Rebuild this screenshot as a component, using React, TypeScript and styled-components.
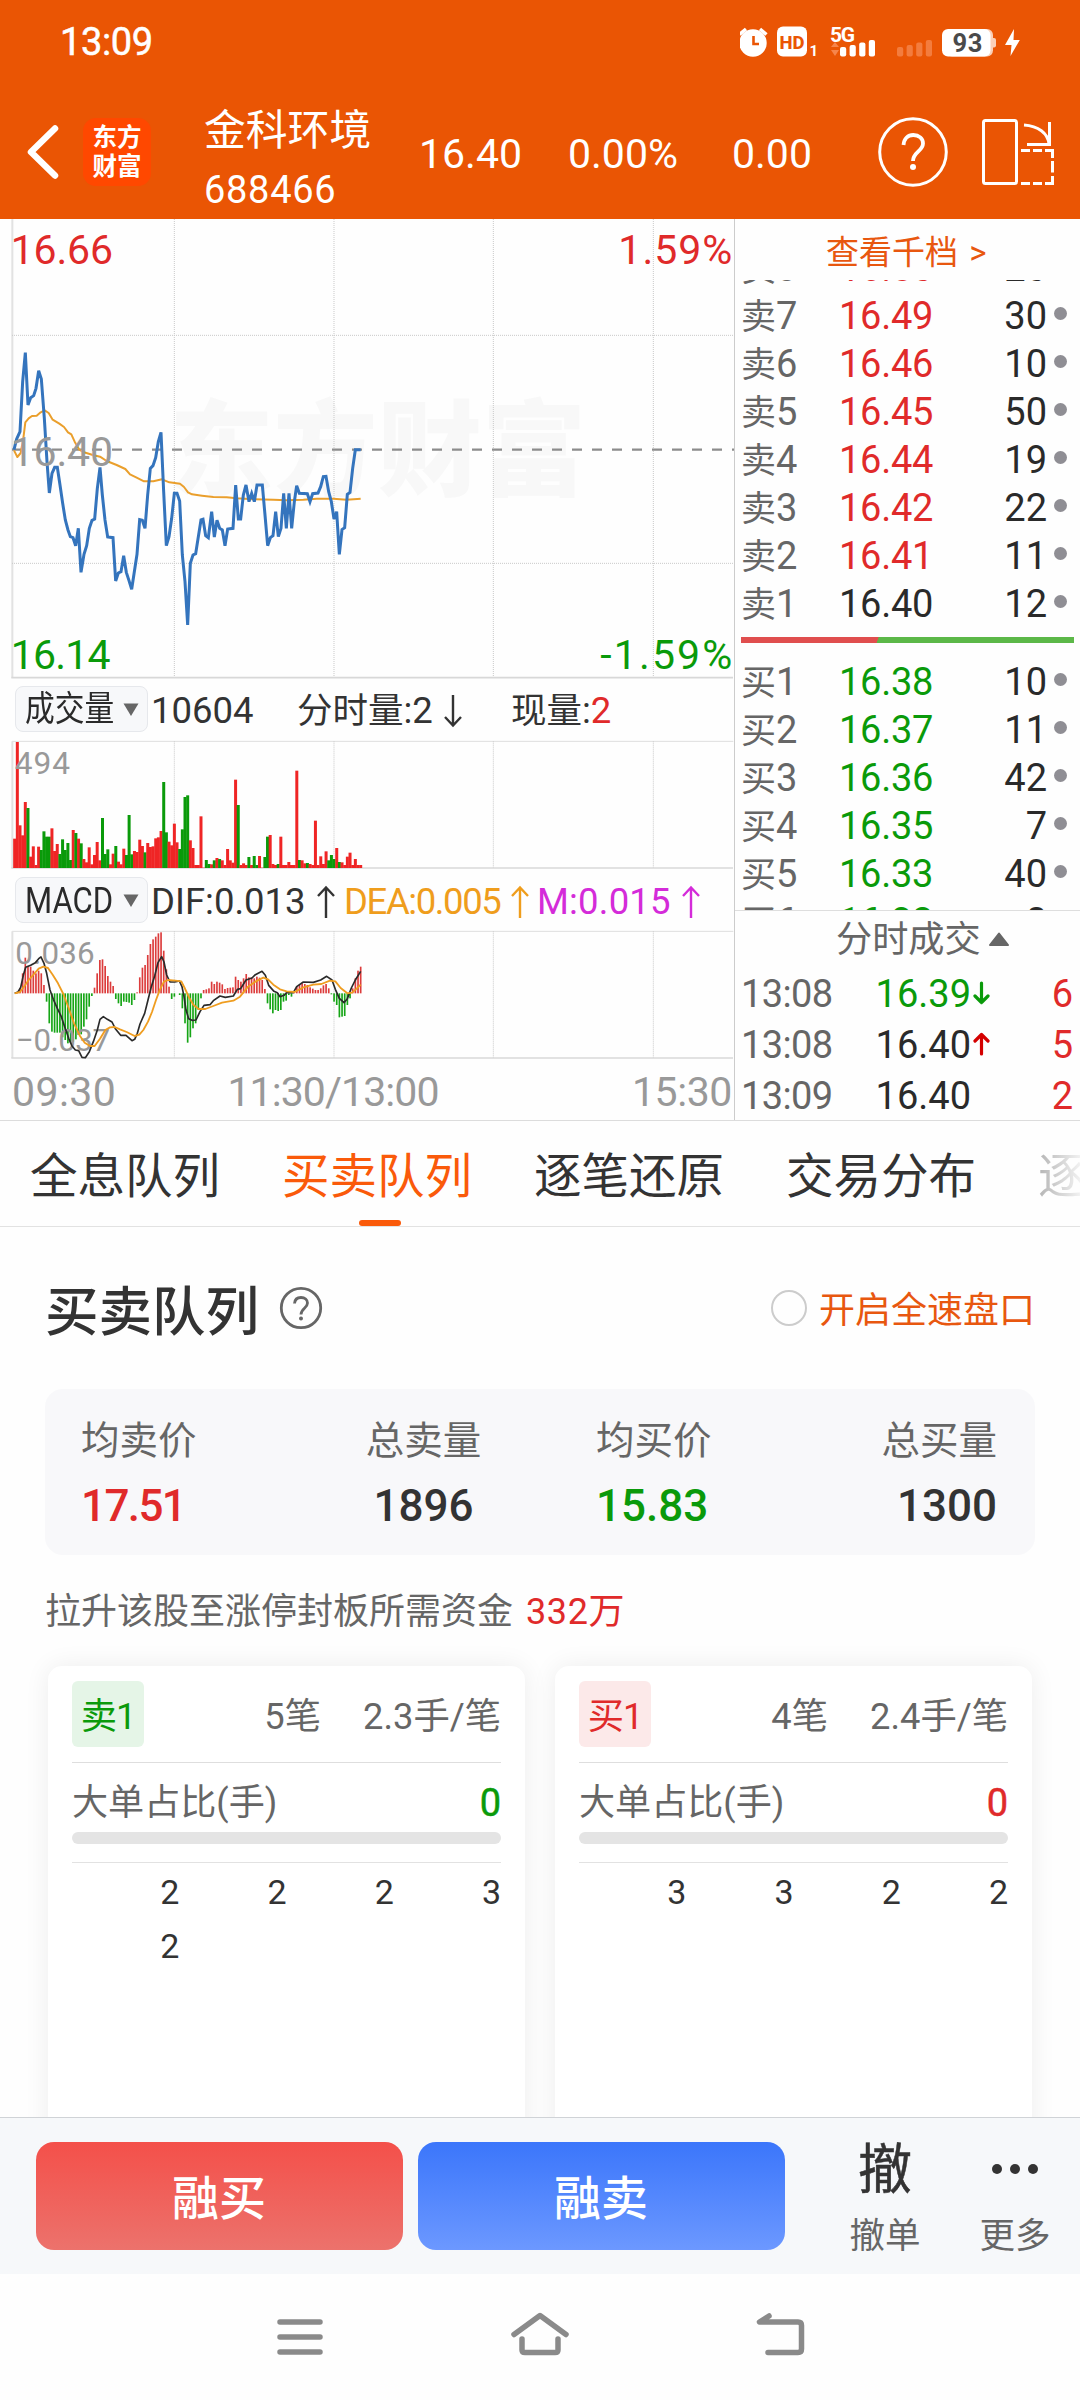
import React from "react";
import styled, { createGlobalStyle, css } from "styled-components";

const RED = "#e02a2a";
const GREEN = "#0a9a0a";
const INK = "#2a2a2a";
const GREY = "#666";
const SANS = `Roboto, "Noto Sans CJK SC", sans-serif`;

const Global = createGlobalStyle`
  * { box-sizing: border-box; }
  body { margin: 0; background: #fff; font-family: ${SANS}; color: ${INK}; }
`;

const Page = styled.div`
  width: 1080px;
  height: 2400px;
  overflow: hidden;
  display: flex;
  flex-direction: column;
  background: #fefefe;
  white-space: nowrap;
`;

/* ---------- header ---------- */
const Header = styled.header`
  height: 219px;
  background: #ea5504;
  color: #fff;
  flex: none;
`;
const StatusBar = styled.div`
  height: 84px;
  padding: 0 60px 0 60px;
  display: flex;
  align-items: center;
  justify-content: space-between;
`;
const Clock = styled.div`
  font-size: 38px;
  -webkit-text-stroke: 0.5px #fff;
  line-height: 84px;
  letter-spacing: -0.4px;
`;
const TitleBar = styled.div`
  height: 135px;
  display: flex;
  align-items: center;
  padding-left: 24px;
`;
const Logo = styled.div`
  width: 68px;
  height: 68px;
  margin: 0 0 0 20px;
  border-radius: 13px;
  background: #ff4800;
  display: flex;
  flex-direction: column;
  align-items: center;
  padding-top: 3px;
  font: 700 24.5px/29px "Noto Sans CJK SC", sans-serif;
`;
const StockName = styled.div`
  width: 215px;
  margin-left: 53px;
  display: flex;
  flex-direction: column;
  padding-top: 16px;
  font-size: 41.8px;
  line-height: 60px;
`;
const StockCode = styled.div`
  font-size: 38px;
  line-height: 58px;
  letter-spacing: 0.7px;
`;
const Quote = styled.div<{ $w: number }>`
  width: ${(p) => p.$w}px;
  font-size: 41px;
  line-height: 50px;
  padding-top: 5px;
`;

/* ---------- market area ---------- */
const Market = styled.section`
  height: 902px;
  flex: none;
  display: flex;
  border-bottom: 1px solid #dcdcdc;
`;
const Charts = styled.div`
  width: 735px;
  border-right: 1px solid #ccc;
  display: flex;
  flex-direction: column;
  svg { display: block; flex: none; }
`;
const ToolRow = styled.div<{ $h: number }>`
  height: ${(p) => p.$h}px;
  flex: none;
  display: flex;
  align-items: center;
  padding-left: 15px;
  font-size: 36.5px;
  color: #333;
`;
const Pill = styled.div`
  width: 133px;
  height: 46px;
  flex: none;
  border: 1px solid #e6e8ec;
  border-radius: 8px;
  background: #f7f8fa;
  display: flex;
  align-items: center;
  padding-left: 9px;
  margin-right: 3px;
  color: ${INK};
`;
const PillText = styled.span<{ $size: number; $scale: number }>`
  width: 98px;
  flex: none;
  font-size: ${(p) => p.$size}px;
  line-height: 44px;
  padding-top: 2px;
  transform: scaleX(${(p) => p.$scale});
  transform-origin: left;
`;
const Metric = styled.div<{ $w: number; $c?: string; $ls?: number }>`
  width: ${(p) => p.$w}px;
  color: ${(p) => p.$c || "#333"};
  letter-spacing: ${(p) => p.$ls || 0}px;
  line-height: 50px;
  padding-top: 3px;
  display: flex;
  align-items: center;
`;
const Cjk = styled.span<{ $size: number }>`
  font-size: ${(p) => p.$size}px;
`;
const TimeAxis = styled.div`
  height: 54px;
  display: flex;
  justify-content: space-between;
  padding: 1px 2px 0 12px;
  font-size: 41px;
  line-height: 54px;
  color: #999;
`;
const AxisTime = styled.span<{ $ls: number; $shift?: number }>`
  letter-spacing: ${(p) => p.$ls}px;
  margin-right: ${(p) => p.$shift || 0}px;
`;

const Book = styled.div`
  flex: 1;
  display: flex;
  flex-direction: column;
  min-width: 0;
`;
const DepthLink = styled.div`
  height: 61px;
  flex: none;
  padding-left: 91px;
  font-size: 33px;
  line-height: 67px;
  color: #e8570f;
  word-spacing: 3px;
`;
const Levels = styled.div`
  height: 631px;
  flex: none;
  overflow: hidden;
  display: flex;
  flex-direction: column;
  border-bottom: 1px solid #dedede;
`;
const Asks = styled.div`
  margin-top: -37px;
  flex: none;
`;
const Bids = styled.div`
  padding-top: 14px;
  flex: none;
`;
const LevelRow = styled.div`
  height: 48px;
  display: flex;
  align-items: center;
  padding: 3px 0 0 6px;
  font-size: 38px;
  line-height: 45px;
`;
const LevelName = styled.div`
  width: 81px;
  color: ${GREY};
`;
const LevelPrice = styled.div<{ $c: string }>`
  width: 111px;
  text-align: right;
  letter-spacing: -0.3px;
  color: ${(p) => p.$c};
`;
const LevelQty = styled.div`
  width: 114px;
  text-align: right;
  color: ${INK};
`;
const Dot = styled.i`
  width: 13px;
  height: 13px;
  border-radius: 50%;
  background: #8f8e94;
  margin: -7px 0 0 7px;
`;
const Ratio = styled.div`
  width: 333px;
  height: 6px;
  flex: none;
  margin: 10px 0 0 6px;
  background: linear-gradient(110deg, #e04e4e 0 41%, #5cb848 41.2%);
`;
const TradesHead = styled.div`
  height: 57px;
  flex: none;
  padding: 2px 0 2px 101px;
  display: flex;
  align-items: center;
  gap: 7px;
  font-size: 36.2px;
  line-height: 56px;
  color: ${GREY};
`;
const TradeRow = styled.div`
  height: 51px;
  flex: none;
  display: flex;
  align-items: center;
  padding: 1px 7px 0 6px;
  font-size: 38px;
  line-height: 51px;
`;
const TradeTime = styled.div`
  width: 100px;
  color: ${GREY};
  letter-spacing: -0.6px;
`;
const TradePrice = styled.div<{ $c: string }>`
  width: 130px;
  text-align: right;
  color: ${(p) => p.$c};
`;
const TradeArrow = styled.div`
  width: 22px;
  padding: 0 0 2px 2px;
  svg { display: block; }
`;
const TradeQty = styled.div`
  flex: 1;
  text-align: right;
  color: ${RED};
`;

/* ---------- tabs ---------- */
const Tabs = styled.nav`
  height: 106px;
  flex: none;
  display: flex;
  gap: 62px;
  padding-left: 30px;
  overflow: hidden;
  border-bottom: 1px solid #e2e2e2;
`;
const Tab = styled.div<{ $on?: boolean; $faded?: boolean }>`
  width: 190px;
  flex: none;
  display: flex;
  flex-direction: column;
  align-items: center;
  justify-content: space-between;
  font-size: 47.5px;
  line-height: 98px;
  padding-top: 7px;
  height: 105px;
  color: ${(p) => (p.$on ? "#fa5a0a" : "#333")};
  ${(p) =>
    p.$faded &&
    css`
      width: 48px;
      align-items: flex-start;
      background: linear-gradient(90deg, #b4b4b4, #f4f4f4 44px);
      background-clip: text;
      -webkit-background-clip: text;
      color: transparent;
    `}
`;
const TabText = styled.span`
  height: 92px;
`;
const Underline = styled.i`
  width: 42px;
  height: 6px;
  margin-left: 5px;
  border-radius: 3px;
  background: #fa5a0a;
`;

/* ---------- queue ---------- */
const Queue = styled.main`
  height: 890px;
  flex: none;
  overflow: hidden;
  padding: 0 45px;
`;
const QueueHead = styled.div`
  height: 162px;
  display: flex;
  align-items: center;
`;
const QueueTitle = styled.h1`
  margin: 0 20px 0 0;
  font-size: 53.5px;
  font-weight: 500;
  line-height: 80px;
  color: #333;
  padding-top: 9px;
`;
const FastToggle = styled.div`
  margin-left: auto;
  display: flex;
  align-items: center;
  gap: 12px;
  font-size: 36px;
  line-height: 50px;
  color: #e8570f;
  padding: 6px 0 0 0;
`;
const Radio = styled.i`
  width: 36px;
  height: 36px;
  margin-top: -6px;
  border: 2px solid #ccc;
  border-radius: 50%;
`;
const Summary = styled.div`
  height: 166px;
  border-radius: 18px;
  background: #f8f8fa;
  display: grid;
  grid-template-columns: 284px 231px 284px 117px;
  padding: 18px 0 0 36px;
`;
const SumCell = styled.div<{ $align: string }>`
  width: 117px;
  text-align: ${(p) => p.$align};
`;
const SumLabel = styled.div`
  font-size: 38.5px;
  line-height: 68px;
  color: ${GREY};
`;
const SumValue = styled.div<{ $c: string; $ls?: number }>`
  font-size: 44px;
  font-weight: 500;
  line-height: 62px;
  letter-spacing: ${(p) => p.$ls || 0}px;
  color: ${(p) => p.$c};
`;
const Note = styled.p`
  margin: 0;
  height: 111px;
  padding-top: 2px;
  font-size: 36px;
  line-height: 111px;
  color: ${GREY};
`;
const NoteValue = styled.span`
  margin-left: 13px;
  letter-spacing: 0.6px;
  color: ${RED};
`;
const Cards = styled.div`
  display: flex;
  gap: 30px;
  padding: 0 3px;
`;
const Card = styled.article`
  width: 477px;
  height: 520px;
  padding: 15px 24px;
  border-radius: 14px;
  background: #fff;
  box-shadow: 0 0 26px rgba(0, 0, 0, 0.07);
`;
const CardTop = styled.div`
  height: 82px;
  display: flex;
  align-items: flex-start;
  justify-content: flex-end;
  border-bottom: 1px solid #dedede;
  color: ${GREY};
  font-size: 36.3px;
  line-height: 71px;
  gap: 42px;
`;
const Badge = styled.span<{ $c: string; $bg: string }>`
  width: 72px;
  height: 66px;
  margin-right: auto;
  border-radius: 6px;
  text-align: center;
  letter-spacing: -1px;
  color: ${(p) => p.$c};
  background: ${(p) => p.$bg};
`;
const BigRow = styled.div`
  display: flex;
  justify-content: space-between;
  height: 69px;
  font-size: 36.1px;
  line-height: 80px;
  color: ${GREY};
`;
const BigValue = styled.span<{ $c: string }>`
  color: ${(p) => p.$c};
  font-size: 38px;
  -webkit-text-stroke: 0.5px ${(p) => p.$c};
`;
const Track = styled.div`
  height: 12px;
  border-radius: 6px;
  background: #e4e4e4;
`;
const Orders = styled.div`
  margin-top: 18px;
  border-top: 1px solid #e2e2e2;
  padding-top: 2px;
  display: grid;
  grid-template-columns: repeat(4, 1fr);
  font-size: 34px;
  line-height: 54px;
  text-align: right;
  color: #333;
`;

/* ---------- bottom ---------- */
const ActionBar = styled.footer`
  height: 157px;
  flex: none;
  border-top: 1px solid #d0d3d7;
  background: #f6f8fa;
  display: flex;
  padding: 24px 0 0 36px;
`;
const Trade = styled.button<{ $from: string; $to: string }>`
  width: 367px;
  height: 108px;
  margin: 0 15px 0 0;
  padding: 5px 1px 0 0;
  border: 0;
  border-radius: 18px;
  background: linear-gradient(${(p) => p.$from}, ${(p) => p.$to});
  color: #fff;
  font: 500 47px/100px ${SANS};
`;
const Action = styled.div<{ $w: number }>`
  width: ${(p) => p.$w}px;
  display: flex;
  flex-direction: column;
  align-items: center;
  font-size: 35.5px;
  line-height: 60px;
  color: ${GREY};
`;
const ActionIcon = styled.div`
  height: 64px;
  display: flex;
  align-items: center;
  padding-bottom: 6px;
  font-size: 54px;
  line-height: 58px;
  -webkit-text-stroke: 0.5px #333;
  color: #333;
  gap: 8px;
`;
const MoreDot = styled.i`
  width: 10px;
  height: 10px;
  border-radius: 50%;
  background: #333;
  margin-top: -4px;
`;
const NavBar = styled.div`
  flex: 1;
  background: #fefefe;
  svg { display: block; }
`;

/* ---------- chart data (one sample per minute, three units per pixel) ---------- */
const X0 = 44;
const STEP = 7.985;
const volume =
  "r476 r186 r436 r466 r366 g384 r530 r499 r555 r500 g510 g454 g470 g470 r445 r513 r492 g522 g478 g510 g489 g540 r450 g459 r476 g490 r537 r547 r502 r553 r525 r486 r541 g414 g522 g508 r553 r521 g498 r545 r553 r506 g525 g405 g523 r513 r516 r479 r498 g517 r489 r501 r499 r475 r472 r453 g306 g457 r485 r496 r431 r487 g507 g448 g351 g346 r481 r504 r555 r555 r409 r563 g540 g552 r553 g541 r534 g537 r541 r555 r507 r541 r548 r299 g375 r555 r550 r555 g531 r555 g528 g555 r528 r563 g531 g470 r465 r552 r555 g552 r470 r555 r555 r546 r555 r555 r272 g540 r541 r550 g549 r552 r555 r422 r555 r529 r552 r514 g541 g525 g537 r504 g546 r547 r555 r530 r518 r555 r537 r555 r555".split(
    " "
  );
const macd =
  "940 936 925 880 833 858 860 872 880 872 880 915 965 1030 1055 1058 1058 1058 1072 1080 1090 1088 1085 1078 1065 1063 1040 1018 980 948 923 880 840 838 858 888 905 918 957 970 978 965 966 968 975 960 937 892 863 855 825 792 778 770 760 757 812 868 920 957 950 940 945 985 1030 1088 1072 1045 1030 990 955 930 928 925 905 912 905 908 913 927 924 923 922 890 900 905 895 882 892 892 895 890 893 900 927 970 988 1000 990 993 990 965 962 945 950 937 920 915 910 912 915 922 926 930 930 925 916 912 925 943 965 975 1012 1010 1008 975 955 925 895 872 860"
    .split(" ")
    .map(Number);
const price =
  "42,704 50,672 60,650 68,500 76,413 84,570 92,548 101,542 108,520 116,467 124,492 133,610 141,740 148,834 156,775 164,757 172,757 180,810 188,865 196,915 204,945 211,965 219,968 227,992 235,940 243,1072 252,1018 260,992 268,940 276,916 284,912 292,820 300,757 307,840 315,915 323,966 339,968 347,1098 355,1074 363,1070 371,1022 379,1072 387,1097 395,1123 403,1070 411,1018 419,914 427,916 435,940 443,840 451,760 459,752 467,728 475,680 483,652 491,830 499,992 507,965 515,910 523,835 531,835 539,858 547,1020 555,1100 563,1230 571,1045 579,1020 587,1016 595,965 603,915 609,913 617,962 625,968 635,890 643,966 651,916 659,940 667,945 675,992 683,942 699,940 707,810 715,912 722,912 730,840 738,810 747,860 755,835 763,860 771,810 787,810 795,900 803,992 811,968 819,962 827,890 835,965 843,940 851,835 859,940 867,835 875,940 883,860 890,812 898,835 922,836 930,860 938,836 954,834 962,815 970,785 978,784 986,830 994,860 1002,912 1010,890 1018,1018 1026,944 1034,938 1042,838 1050,832 1058,760 1066,704 1082,704";
const average =
  "42,706 52,726 62,714 70,670 76,622 86,610 96,603 110,602 122,592 134,586 146,594 158,614 178,626 192,636 204,652 214,658 224,680 238,704 252,712 276,719 300,725 320,738 350,750 376,762 390,778 410,788 432,799 460,799 486,793 508,802 540,806 552,816 564,832 576,838 606,842 640,846 680,847 710,850 760,853 820,854 860,856 910,854 950,851 1000,851 1040,854 1082,851";
const dif =
  "44,940 54,936 62,922 70,886 77,862 92,856 106,848 116,836 123,831 132,850 140,880 150,930 160,958 172,985 184,1010 194,1040 206,1075 216,1098 226,1110 236,1112 246,1132 256,1133 268,1115 280,1085 292,1050 300,1018 310,1010 322,1018 336,1026 346,1046 362,1066 378,1066 396,1082 404,1078 412,1060 420,1032 434,1000 444,960 454,920 464,888 474,848 485,830 492,846 500,885 510,906 524,906 538,903 546,920 552,950 558,990 566,1016 576,1021 588,1020 600,995 612,976 630,974 640,962 660,948 676,952 700,948 712,928 722,926 738,900 756,894 766,884 786,874 796,886 806,916 822,934 832,938 840,950 852,946 860,938 880,938 890,920 910,906 940,907 962,900 980,889 996,900 1006,928 1018,955 1032,968 1042,956 1054,924 1066,900 1082,874";
const dea =
  "44,940 60,936 72,920 86,900 102,882 116,866 130,860 144,864 158,884 174,910 190,942 206,984 222,1030 240,1068 254,1088 270,1098 284,1098 300,1076 316,1050 330,1042 344,1041 360,1048 380,1056 404,1068 418,1064 430,1050 444,1025 456,996 468,960 480,928 492,905 504,900 526,902 544,904 554,924 566,950 580,974 596,987 616,987 640,978 666,968 700,962 720,950 744,920 766,905 790,893 804,898 820,914 840,928 860,934 884,936 910,922 940,914 964,912 990,902 1006,904 1022,924 1042,940 1056,938 1070,926 1082,914";

const verticals = [523, 1002, 1480, 1960];
const tone = { r: "#ef2525", g: "#0a9a0a" } as Record<string, string>;

const Grid = ({ top, bottom }: { top: number; bottom: number }) => (
  <g>
    {verticals.map((x) => (
      <path key={x} d={`M${x} ${top}V${bottom}`} stroke="#c9c9c9" strokeWidth={3} strokeDasharray="3 3" />
    ))}
    <path d={`M37 ${top}V${bottom}`} stroke="#e2e2e2" strokeWidth={6} />
    <path d={`M34 ${bottom}H2199`} stroke="#d8d8d8" strokeWidth={5} />
  </g>
);

const Label = ({ x, y, size = 123, fill = "#999", end, len, children }: any) => (
  <text x={x} y={y} fontSize={size} fill={fill} textAnchor={end ? "end" : "start"} textLength={len} fontFamily="Roboto, sans-serif">
    {children}
  </text>
);

const PriceChart = () => (
  <svg width="734" height="461" viewBox="0 12 2202 1383">
    <text x="508" y="820" fontSize="312" fontWeight="900" fill="#f8f8f8" textLength="1250" fontFamily='"Noto Sans CJK SC", sans-serif'>
      东方财富
    </text>
    <Grid top={12} bottom={1388} />
    <path d="M36 361H2200M36 1045H2200" stroke="#c9c9c9" strokeWidth={3} strokeDasharray="3 3" />
    <path d="M36 704H2202" stroke="#8c8c8c" strokeWidth={7} strokeDasharray="30 30" />
    <polyline points={average} fill="none" stroke="#ea9f2c" strokeWidth={6} strokeLinejoin="round" />
    <polyline points={price} fill="none" stroke="#3474bd" strokeWidth={9} />
    <Label x={32} y={147} len={307} fill={RED}>16.66</Label>
    <Label x={32} y={752} len={307}>16.40</Label>
    <Label x={32} y={1361} len={300} fill={GREEN}>16.14</Label>
    <Label x={2197} y={147} len={342} fill={RED} end>1.59%</Label>
    <Label x={2197} y={1361} len={396} fill={GREEN} end>-1.59%</Label>
  </svg>
);

const VolumeChart = () => (
  <svg width="734" height="132" viewBox="0 174 2202 396">
    <path d="M36 184H2200" stroke="#dedede" strokeWidth={3} />
    <Grid top={184} bottom={564} />
    {volume.map((v, i) => {
      const y = Number(v.slice(1));
      return <rect key={i} x={X0 + i * STEP - 4.5} y={y} width={9} height={564 - y} fill={tone[v[0]]} />;
    })}
    <Label x={44} y={283} size={95} len={166}>494</Label>
  </svg>
);

const MacdChart = () => (
  <svg width="734" height="134" viewBox="0 750 2202 402">
    <path d="M36 754H2200" stroke="#dedede" strokeWidth={3} />
    <Grid top={754} bottom={1134} />
    {macd.map((y, i) => (
      <rect
        key={i}
        x={X0 + i * STEP - 2.5}
        y={Math.min(y, 940)}
        width={5}
        height={Math.abs(y - 940)}
        fill={y < 940 ? "#dc3c3c" : "#16a516"}
      />
    ))}
    <Label x={46} y={853} size={94} len={238}>0.036</Label>
    <Label x={48} y={1114} size={94} len={282}>−0.037</Label>
    <polyline points={dif} fill="none" stroke="#2a2a2a" strokeWidth={5} strokeLinejoin="round" />
    <polyline points={dea} fill="none" stroke="#ef9d20" strokeWidth={5.5} strokeLinejoin="round" />
  </svg>
);

const ArrowSvg = styled.svg`
  margin-left: 11px;
`;
const ThinArrow = ({ up, color = "#333" }: { up?: boolean; color?: string }) => (
  <ArrowSvg width="18" height="34" viewBox="0 0 18 34" fill="none" stroke={color} strokeWidth="2.4">
    {up ? <path d="M9 33V2M1 11L9 2.5L17 11" /> : <path d="M9 1V32M1 23L9 31.5L17 23" />}
  </ArrowSvg>
);

const BoldArrow = ({ up }: { up?: boolean }) => (
  <svg width="17" height="24" viewBox="0 0 17 24" fill="none" stroke={up ? "#d40000" : GREEN} strokeWidth="3.2" strokeLinecap="round" strokeLinejoin="round">
    {up ? <path d="M8.5 22V2.5M2 9L8.5 2.5L15 9" /> : <path d="M8.5 2V21.5M2 15L8.5 21.5L15 15" />}
  </svg>
);

const PillCaret = () => (
  <svg width="16" height="13" viewBox="0 0 16 13">
    <path d="M0.5 0.5H15.5L8 13Z" fill="#666" />
  </svg>
);

const StatusIcons = () => (
  <svg width="280" height="40" viewBox="740 23 280 40" fill="#fff" fontFamily="Roboto, sans-serif">
    <circle cx="753" cy="44" r="13.7" />
    <path d="M739.5 35.5L746 30M766.5 35.5L760 30" stroke="#fff" strokeWidth="3.4" />
    <path d="M753.5 37V45H759" fill="none" stroke="#ea5504" strokeWidth="2.6" />
    <rect x="777" y="27.5" width="30" height="30" rx="6" />
    <text x="779.5" y="49.5" fontSize="18.5" fontWeight="800" fill="#ea5504" textLength="25">HD</text>
    <text x="809.5" y="57" fontSize="15" fontWeight="700">1</text>
    <text x="830" y="42.5" fontSize="21" fontWeight="700" textLength="25">5G</text>
    <path d="M831 48L835 43L839 48ZM831 51L835 57L839 51Z" fill="#f6854b" />
    {[48, 46, 43.5, 41].map((y, i) => (
      <rect key={y} x={840 + i * 9.6} y={y} width="6.2" height={57.5 - y} rx="2" />
    ))}
    {[48, 46, 43.5, 41].map((y, i) => (
      <rect key={y} x={897 + i * 9.6} y={y} width="6.2" height={57.5 - y} rx="2" fill="#f37c3e" />
    ))}
    <rect x="946" y="30" width="47" height="27.5" rx="6" fill="#fbd0b8" />
    <rect x="991" y="39" width="5" height="9.5" rx="2" fill="#fbd0b8" />
    <rect x="942" y="30" width="48.5" height="27.5" rx="6" />
    <text x="952.5" y="53" fontSize="25.5" fontWeight="700" fill="#4a4a4a" textLength="30">93</text>
    <path d="M1014 30L1005 46H1011.5L1010.5 57L1019.8 41H1013.5Z" />
  </svg>
);

const BackIcon = () => (
  <svg width="39" height="60" viewBox="24 121 39 60" fill="none" stroke="#fff" strokeWidth="6.5" strokeLinecap="round" strokeLinejoin="round">
    <path d="M55 127.5L31 151L55 174.5" />
  </svg>
);

const HelpIcon = () => (
  <svg width="72" height="72" viewBox="0 0 72 72" fill="none" stroke="#fff">
    <circle cx="36" cy="36" r="33.3" strokeWidth="3" />
    <path d="M26.5 29C27 22.5 31 19 36.3 19C42 19 46 22.6 46 27.5C46 35 36 36 36 45" strokeWidth="3.8" />
    <circle cx="36" cy="51" r="3" fill="#fff" stroke="none" />
  </svg>
);

const RotateSvg = styled.svg`
  margin-left: 31px;
`;
const RotateIcon = () => (
  <RotateSvg width="76" height="72" viewBox="980 115 76 72" fill="none" stroke="#fff" strokeWidth="3">
    <rect x="983.5" y="119.5" width="33" height="63" rx="2" />
    <path d="M1024 124C1038 125 1048 132 1049 143M1049.5 121V143.5H1027" />
    <path d="M1021 149.5H1030M1033 149.5H1042M1045 149.5H1052.5V157M1052.5 160V171.5M1052.5 175V182.5H1045M1042 182.5H1033M1030 182.5H1021" />
  </RotateSvg>
);

const InfoIcon = () => (
  <svg width="44" height="44" viewBox="0 0 44 44" fill="none" stroke="#666" strokeWidth="2.8">
    <circle cx="22" cy="22" r="19.7" />
    <path d="M15.5 17.5C15.8 13.5 18.5 11.5 22 11.5C25.8 11.5 28.5 13.8 28.5 17C28.5 22 22 22.5 22 28.5" />
    <circle cx="22" cy="32.5" r="2" fill="#666" stroke="none" />
  </svg>
);

type Level = [string, string, string, string];
const asks: Level[] = [
  ["卖", "8", "16.50", "20"],
  ["卖", "7", "16.49", "30"],
  ["卖", "6", "16.46", "10"],
  ["卖", "5", "16.45", "50"],
  ["卖", "4", "16.44", "19"],
  ["卖", "3", "16.42", "22"],
  ["卖", "2", "16.41", "11"],
  ["卖", "1", "16.40", "12"],
];
const bids: Level[] = [
  ["买", "1", "16.38", "10"],
  ["买", "2", "16.37", "11"],
  ["买", "3", "16.36", "42"],
  ["买", "4", "16.35", "7"],
  ["买", "5", "16.33", "40"],
  ["买", "6", "16.32", "8"],
];

const LevelLine = ({ level: [side, n, p, q], tint }: { level: Level; tint: string }) => (
  <LevelRow>
    <LevelName>
      <Cjk $size={35}>{side}</Cjk>
      {n}
    </LevelName>
    <LevelPrice $c={p === "16.40" ? INK : tint}>{p}</LevelPrice>
    <LevelQty>{q}</LevelQty>
    <Dot />
  </LevelRow>
);

const RedText = styled.span`
  color: ${RED};
`;

const trades = [
  { t: "13:08", p: "16.39", dir: "down", q: "6", c: GREEN },
  { t: "13:08", p: "16.40", dir: "up", q: "5", c: INK },
  { t: "13:09", p: "16.40", dir: "", q: "2", c: INK },
];

const queueCards = [
  { tag: "卖1", c: GREEN, bg: "#e5f5e7", count: "5笔", avg: "2.3手/笔", orders: [2, 2, 2, 3, 2] },
  { tag: "买1", c: RED, bg: "#fce9e9", count: "4笔", avg: "2.4手/笔", orders: [3, 3, 2, 2] },
];

export default function App() {
  return (
    <Page>
      <Global />
      <Header>
        <StatusBar>
          <Clock>13:09</Clock>
          <StatusIcons />
        </StatusBar>
        <TitleBar>
          <BackIcon />
          <Logo>
            <span>东方</span>
            <span>财富</span>
          </Logo>
          <StockName>
            金科环境
            <StockCode>688466</StockCode>
          </StockName>
          <Quote $w={149}>16.40</Quote>
          <Quote $w={164}>0.00%</Quote>
          <Quote $w={145}>0.00</Quote>
          <HelpIcon />
          <RotateIcon />
        </TitleBar>
      </Header>

      <Market>
        <Charts>
          <PriceChart />
          <ToolRow $h={58}>
            <Pill>
              <PillText $size={35} $scale={0.85}>成交量</PillText>
              <PillCaret />
            </Pill>
            <Metric $w={146}>10604</Metric>
            <Metric $w={214}>
              <Cjk $size={35.5}>分时量</Cjk>:2
              <ThinArrow />
            </Metric>
            <Metric $w={120}>
              <Cjk $size={35.5}>现量</Cjk>:<RedText>2</RedText>
            </Metric>
          </ToolRow>
          <VolumeChart />
          <ToolRow $h={60}>
            <Pill>
              <PillText $size={37} $scale={0.84}>MACD</PillText>
              <PillCaret />
            </Pill>
            <Metric $w={193}>
              DIF:0.013
              <ThinArrow up />
            </Metric>
            <Metric $w={193} $c="#ef9d1c" $ls={-1.4}>
              DEA:0.005
              <ThinArrow up color="#ef9d1c" />
            </Metric>
            <Metric $w={170} $c="#d42bd9" $ls={0.2}>
              M:0.015
              <ThinArrow up color="#d42bd9" />
            </Metric>
          </ToolRow>
          <MacdChart />
          <TimeAxis>
            <AxisTime $ls={0.4}>09:30</AxisTime>
            <AxisTime $ls={-0.9} $shift={82}>11:30/13:00</AxisTime>
            <AxisTime $ls={-0.4}>15:30</AxisTime>
          </TimeAxis>
        </Charts>
        <Book>
          <DepthLink>查看千档 &gt;</DepthLink>
          <Levels>
            <Asks>
              {asks.map((l) => (
                <LevelLine key={l[1]} level={l} tint={RED} />
              ))}
            </Asks>
            <Ratio />
            <Bids>
              {bids.map((l) => (
                <LevelLine key={l[1]} level={l} tint={GREEN} />
              ))}
            </Bids>
          </Levels>
          <TradesHead>
            分时成交
            <svg width="22" height="15" viewBox="0 0 22 15">
              <path d="M11 1.5L20 13H2Z" fill="#666" stroke="#666" strokeWidth="2" strokeLinejoin="round" />
            </svg>
          </TradesHead>
          {trades.map((r, i) => (
            <TradeRow key={i}>
              <TradeTime>{r.t}</TradeTime>
              <TradePrice $c={r.c}>{r.p}</TradePrice>
              <TradeArrow>{r.dir && <BoldArrow up={r.dir === "up"} />}</TradeArrow>
              <TradeQty>{r.q}</TradeQty>
            </TradeRow>
          ))}
        </Book>
      </Market>

      <Tabs>
        <Tab><TabText>全息队列</TabText></Tab>
        <Tab $on>
          <TabText>买卖队列</TabText>
          <Underline />
        </Tab>
        <Tab><TabText>逐笔还原</TabText></Tab>
        <Tab><TabText>交易分布</TabText></Tab>
        <Tab $faded><TabText>逐</TabText></Tab>
      </Tabs>

      <Queue>
        <QueueHead>
          <QueueTitle>买卖队列</QueueTitle>
          <InfoIcon />
          <FastToggle>
            <Radio />
            开启全速盘口
          </FastToggle>
        </QueueHead>
        <Summary>
          <SumCell $align="left">
            <SumLabel>均卖价</SumLabel>
            <SumValue $c={RED} $ls={-1.6}>17.51</SumValue>
          </SumCell>
          <SumCell $align="center">
            <SumLabel>总卖量</SumLabel>
            <SumValue $c="#333">1896</SumValue>
          </SumCell>
          <SumCell $align="left">
            <SumLabel>均买价</SumLabel>
            <SumValue $c={GREEN}>15.83</SumValue>
          </SumCell>
          <SumCell $align="right">
            <SumLabel>总买量</SumLabel>
            <SumValue $c="#333">1300</SumValue>
          </SumCell>
        </Summary>
        <Note>
          拉升该股至涨停封板所需资金<NoteValue>332万</NoteValue>
        </Note>
        <Cards>
          {queueCards.map((c) => (
            <Card key={c.tag}>
              <CardTop>
                <Badge $c={c.c} $bg={c.bg}>{c.tag}</Badge>
                <span>{c.count}</span>
                <span>{c.avg}</span>
              </CardTop>
              <BigRow>
                大单占比(手)<BigValue $c={c.c}>0</BigValue>
              </BigRow>
              <Track />
              <Orders>
                {c.orders.map((o, i) => (
                  <span key={i}>{o}</span>
                ))}
              </Orders>
            </Card>
          ))}
        </Cards>
      </Queue>

      <ActionBar>
        <Trade $from="#f4504a" $to="#ec726c">融买</Trade>
        <Trade $from="#3b76fb" $to="#6c98ff">融卖</Trade>
        <Action $w={170}>
          <ActionIcon>撤</ActionIcon>
          撤单
        </Action>
        <Action $w={90}>
          <ActionIcon>
            <MoreDot />
            <MoreDot />
            <MoreDot />
          </ActionIcon>
          更多
        </Action>
      </ActionBar>
      <NavBar>
        <svg width="1080" height="126" viewBox="0 2274 1080 126" fill="none" stroke="#8a8a8a" strokeWidth="5.5" strokeLinecap="round" strokeLinejoin="round">
          <path d="M280 2322H320M280 2337H320M280 2352H320" />
          <path d="M514 2334.5L540 2315.5L566 2334.5M522 2339V2350Q522 2352.5 525 2352.5H555Q558 2352.5 558 2350V2339" />
          <path d="M769 2316L759.5 2322H798Q801.5 2322 801.5 2325.5V2349Q801.5 2352.5 798 2352.5H768" />
        </svg>
      </NavBar>
    </Page>
  );
}
